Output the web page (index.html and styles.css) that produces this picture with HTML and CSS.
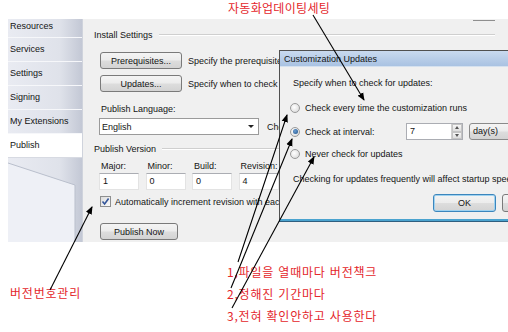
FILE: index.html
```html
<!DOCTYPE html>
<html lang="ko">
<head>
    <meta charset="UTF-8">
    <title>Publish - Customization Updates</title>
    <link rel="stylesheet" href="styles.css">
</head>
<body>
    <div class="page">
        <div class="shot">
            <nav class="side">
                <div class="side-item first">Resources</div>
                <div class="side-item">Services</div>
                <div class="side-item">Settings</div>
                <div class="side-item">Signing</div>
                <div class="side-item">My Extensions</div>
                <div class="side-item active">Publish</div>
                <div class="side-fill">
                    <svg width="74" height="85" viewBox="0 0 74 85">
                        <polygon points="0,5 67,27 67,85 0,85" fill="#eef0f6"/>
                        <polyline points="0,5 67,27 67,85" fill="none" stroke="#b9bfcc" stroke-width="1"/>
                    </svg>
                </div>
            </nav>

            <section class="main">
                <div class="cut-edge"></div>
                <div class="group-head"><span>Install Settings</span><i class="rule"></i></div>
                <div class="btn-row">
                    <button class="btn wide">Prerequisites...</button>
                    <span class="hint">Specify the prerequisites to be installed</span>
                </div>
                <div class="btn-row">
                    <button class="btn wide">Updates...</button>
                    <span class="hint">Specify when to check for updates</span>
                </div>

                <div class="field-label">Publish Language:</div>
                <div class="lang-row">
                    <div class="combo"><span>English</span><i class="combo-arrow"></i></div>
                    <span class="hint">Choose the language</span>
                </div>

                <div class="group-head second"><span>Publish Version</span><i class="rule"></i></div>
                <div class="version-grid">
                    <span class="v-label">Major:</span>
                    <span class="v-label">Minor:</span>
                    <span class="v-label">Build:</span>
                    <span class="v-label">Revision:</span>
                    <div class="textbox">1</div>
                    <div class="textbox">0</div>
                    <div class="textbox">0</div>
                    <div class="textbox">4</div>
                </div>
                <label class="check-row">
                    <span class="checkbox">
                        <svg width="9" height="9" viewBox="0 0 9 9"><path d="M1.5 4.5 L3.6 7 L7.6 1.5" fill="none" stroke="#34569a" stroke-width="1.6"/></svg>
                    </span>
                    Automatically increment revision with each publish
                </label>
                <button class="btn publish">Publish Now</button>
            </section>
        </div>

        <div class="dialog">
            <div class="dialog-title">Customization Updates</div>
            <div class="dialog-body">
                <p class="lead">Specify when to check for updates:</p>
                <div class="radio-row every"><span class="radio"></span>Check every time the customization runs</div>
                <div class="radio-row interval">
                    <span class="radio on"></span><span class="interval-label">Check at interval:</span>
                    <div class="spin">
                        <span class="spin-value">7</span>
                        <span class="spin-btns"><i class="up"></i><i class="down"></i></span>
                    </div>
                    <div class="unit">day(s)</div>
                </div>
                <div class="radio-row never"><span class="radio"></span>Never check for updates</div>
                <p class="note">Checking for updates frequently will affect startup speed.</p>
                <div class="dialog-btns">
                    <button class="btn ok">OK</button>
                    <button class="btn">Cancel</button>
                </div>
            </div>
        </div>

        <!-- annotation layer -->
        <div class="notes">
            <span class="note-text title">자동화업데이팅세팅</span>
            <span class="note-text ver">버전번호관리</span>
            <div class="note-list">
                <span class="note-text">1,파일을 열때마다 버전책크</span>
                <span class="note-text">2,정해진 기간마다</span>
                <span class="note-text">3,전혀 확인안하고 사용한다</span>
            </div>
            <svg class="arrows" width="508" height="332" viewBox="0 0 508 332">
                <defs>
                    <marker id="head" markerWidth="8" markerHeight="8" refX="7" refY="4" orient="auto" markerUnits="userSpaceOnUse">
                        <path d="M0,0.8 L8,4 L0,7.2 Z" fill="#000"/>
                    </marker>
                </defs>
                <g stroke="#000" stroke-width="1.1" marker-end="url(#head)">
                    <line x1="313" y1="15" x2="364" y2="100"/>
                    <line x1="50" y1="290" x2="92" y2="207"/>
                    <line x1="238" y1="262" x2="287" y2="115"/>
                    <line x1="231" y1="288" x2="292" y2="139"/>
                    <line x1="232" y1="308" x2="314" y2="157"/>
                </g>
            </svg>
        </div>
    </div>
</body>
</html>
```

FILE: styles.css
```css
* {
    box-sizing: border-box;
}
body {
    margin: 0;
    padding: 0;
    background: #fff;
    font-family: "Liberation Sans", Arial, sans-serif;
    font-size: 9px;
    line-height: 12px;
    color: #141414;
    overflow: hidden;
}
.page {
    width: 508px;
    height: 332px;
    position: relative;
    overflow: hidden;
}
.shot {
    display: flex;
    height: 223px;
    margin-top: 19px;
    margin-left: 8px;
}

/* left tab list */
.side {
    width: 74px;
    display: flex;
    flex-direction: column;
    background: linear-gradient(to right, #e9ebf2 0%, #dfe2ea 70%, #c3c8d5 100%);
    overflow: hidden;
}
.side-item {
    height: 24px;
    line-height: 23px;
    padding-left: 2px;
    border-bottom: 1px solid #f6f7fa;
    white-space: nowrap;
    flex: none;
}
.side-item.first {
    height: 19px;
    line-height: 14px;
}
.side-item.active {
    background: #fff;
    border-bottom-color: #d7dae2;
}
.side-fill {
    flex: 1;
}
.side-fill svg {
    display: block;
}

/* main panel */
.main {
    flex: 1;
    background: #f0f0f0;
    padding-left: 11px;
    border-left: 1px solid #cfd3dc;
}
.cut-edge {
    width: 22px;
    height: 1px;
    margin: 1px 13px 0 auto;
    background: #8f8f8f;
}
.group-head {
    display: flex;
    align-items: center;
    height: 12px;
    margin-top: 8px;
    margin-right: 13px;
}
.rule {
    flex: 1;
    height: 2px;
    margin-left: 6px;
    border-top: 1px solid #cfcfcf;
    border-bottom: 1px solid #fff;
}
.btn-row {
    display: flex;
    align-items: center;
    gap: 6px;
    margin-left: 6px;
    margin-top: 11px;
    white-space: nowrap;
}
.btn-row + .btn-row {
    margin-top: 6px;
}
.btn {
    font-family: inherit;
    font-size: 9px;
    color: #141414;
    height: 17px;
    padding: 0;
    border: 1px solid #7a7a7a;
    border-radius: 3px;
    background: linear-gradient(#f4f4f4 0%, #ececec 48%, #dddddd 52%, #d3d3d3 100%);
    flex: none;
}
.btn.wide {
    width: 82px;
}
.hint {
    white-space: nowrap;
}
.field-label {
    margin: 11px 0 0 7px;
}
.lang-row {
    display: flex;
    align-items: center;
    gap: 8px;
    margin: 3px 0 0 5px;
    white-space: nowrap;
}
.combo {
    width: 160px;
    height: 17px;
    border: 1px solid #9a9a9a;
    background: #fff;
    display: flex;
    align-items: center;
    justify-content: space-between;
    padding: 0 4px 0 2px;
    flex: none;
}
.combo-arrow {
    width: 0;
    height: 0;
    border-left: 3px solid transparent;
    border-right: 3px solid transparent;
    border-top: 3px solid #222;
}
.version-grid {
    display: grid;
    grid-template-columns: repeat(4, 40px);
    column-gap: 6.5px;
    margin: 4px 0 0 5px;
}
.v-label {
    padding-left: 2px;
    line-height: 14px;
}
.textbox {
    height: 17px;
    background: #fff;
    border: 1px solid #e3e3e3;
    border-top-color: #abadb3;
    padding-left: 3px;
    line-height: 15px;
}
.check-row {
    display: flex;
    align-items: center;
    gap: 4px;
    margin: 6px 0 0 6px;
    white-space: nowrap;
    height: 11px;
}
.checkbox {
    width: 11px;
    height: 11px;
    border: 1px solid #8e8f8f;
    background: linear-gradient(135deg, #dcdcdc, #fbfbfb);
    display: flex;
    align-items: center;
    justify-content: center;
    flex: none;
}
.checkbox svg {
    display: block;
}
.btn.publish {
    width: 78px;
    margin: 16px 0 0 6px;
    display: block;
}

/* dialog over the panel */
.dialog {
    position: absolute;
    left: 279px;
    top: 50px;
    width: 250px;
    height: 171px;
    background: #f0f0f0;
    border-top: 1px solid #505050;
    border-left: 1px solid #505050;
    border-bottom: 2px solid #4aa3cf;
    box-shadow: 0 1px 0 #2f5f80;
}
.dialog-title {
    height: 16px;
    line-height: 16px;
    padding-left: 4px;
    background: linear-gradient(#c9daef, #a9c2e2);
    border-bottom: 1px solid #d5e1ef;
}
.dialog-body {
    padding-left: 13px;
}
.lead {
    margin: 10px 0 0;
}
.radio-row {
    display: flex;
    align-items: center;
    height: 12px;
    margin-left: -3px;
    white-space: nowrap;
}
.radio-row.every {
    margin-top: 13px;
}
.radio-row.interval {
    height: 17px;
    margin-top: 9px;
}
.radio-row.never {
    margin-top: 8px;
}
.radio {
    width: 10px;
    height: 10px;
    border-radius: 50%;
    border: 1px solid #9a9a9a;
    background: radial-gradient(circle at 40% 40%, #fff 0%, #e6e6e6 60%, #cfcfcf 100%);
    margin-right: 5px;
    flex: none;
    display: flex;
    align-items: center;
    justify-content: center;
}
.radio.on::after {
    content: "";
    width: 5px;
    height: 5px;
    border-radius: 50%;
    background: radial-gradient(circle at 40% 40%, #6b9fd4, #1d4f86);
}
.interval-label {
    width: 102px;
}
.spin {
    width: 57px;
    height: 17px;
    border: 1px solid #abadb3;
    background: #fff;
    display: flex;
    justify-content: space-between;
    flex: none;
}
.spin-value {
    padding-left: 3px;
    line-height: 15px;
}
.spin-btns {
    width: 11px;
    display: flex;
    flex-direction: column;
    border-left: 1px solid #d0d0d0;
}
.spin-btns i {
    flex: 1;
    background: linear-gradient(#f6f6f6, #dedede);
    border: 1px solid #c4c4c4;
    position: relative;
}
.spin-btns i::after {
    content: "";
    position: absolute;
    left: 2px;
    border-left: 2.5px solid transparent;
    border-right: 2.5px solid transparent;
}
.spin-btns .up::after {
    top: 1px;
    border-bottom: 3px solid #555;
}
.spin-btns .down::after {
    top: 1px;
    border-top: 3px solid #555;
}
.unit {
    margin-left: 6px;
    height: 17px;
    width: 60px;
    line-height: 15px;
    padding-left: 3px;
    border: 1px solid #8a8a8a;
    border-radius: 3px;
    background: linear-gradient(#f4f4f4 0%, #ececec 48%, #dddddd 52%, #d3d3d3 100%);
    flex: none;
}
.note {
    margin: 13px 0 0;
    white-space: nowrap;
}
.dialog-btns {
    display: flex;
    gap: 6px;
    margin: 9px 0 0 140px;
}
.dialog-btns .btn {
    width: 63px;
    height: 18px;
}
.btn.ok {
    border-color: #3c86bd;
    box-shadow: inset 0 0 0 1px #9fd2f0;
}

/* red annotations */
.notes {
    position: absolute;
    left: 0;
    top: 0;
    width: 508px;
    height: 332px;
    pointer-events: none;
}
.note-text {
    font-family: "Noto Sans CJK KR", "Noto Sans", sans-serif;
    font-size: 12px;
    line-height: 14px;
    color: #e4262b;
    white-space: nowrap;
    letter-spacing: 0.8px;
}
.note-text.title {
    position: absolute;
    left: 228px;
    top: 1px;
    letter-spacing: 0.3px;
}
.note-text.ver {
    position: absolute;
    left: 10px;
    top: 286px;
}
.note-list {
    position: absolute;
    left: 227px;
    top: 265px;
    display: flex;
    flex-direction: column;
    gap: 8px;
}
.arrows {
    position: absolute;
    left: 0;
    top: 0;
}
```
